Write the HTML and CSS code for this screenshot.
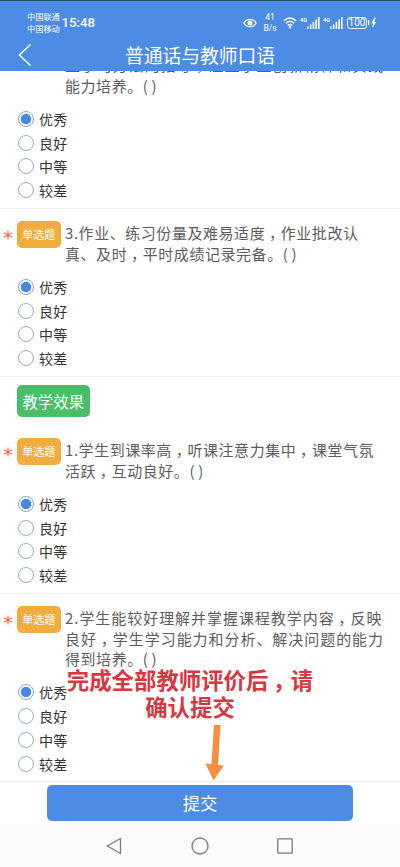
FILE: index.html
```html
<!DOCTYPE html>
<html lang="zh-CN">
<head>
<meta charset="utf-8">
<meta name="viewport" content="width=device-width">
<title>普通话与教师口语</title>
<link rel="stylesheet" href="styles.css">
</head>
<body>
<div class="phone">
  <header class="top">
    <div class="status">
      <div class="carriers"><span>中国联通</span><span>中国移动</span></div>
      <div class="time">15:48</div>
      <svg class="eye" width="14" height="10" viewBox="0 0 14 10"><path d="M.8 5C3.5.1 10.500.1 13.200 5C10.500 9.900 3.500 9.900.8 5Z" fill="none" stroke="#fff" stroke-width="1.3"/><circle cx="7" cy="5" r="2.500" fill="#fff"/></svg>
      <div class="speed"><span>41</span><span>B/s</span></div>
      <svg class="wifi" width="14" height="12" viewBox="0 0 14 12" fill="none" stroke="#fff" stroke-width="1.300"><path d="M.8 3.800Q7-1.700 13.200 3.800M2.800 6.200Q7 2.600 11.200 6.200M4.700 8.400Q7 6.600 9.300 8.400"/><circle cx="7" cy="10.300" r=".6" fill="#fff"/></svg>
      <div class="signal"><b>4G</b><svg width="13" height="12" viewBox="0 0 13 12" fill="#fff"><path d="M0 9.500h1.500V12H0zM2.800 7.500h1.600V12H2.800zM5.600 5h1.600v7H5.600zM8.300 2.500h1.600V12H8.300zM11 0h1.600v12H11z"/></svg></div>
      <div class="signal second"><b>4G</b><svg width="13" height="12" viewBox="0 0 13 12" fill="#fff"><path d="M0 9.500h1.500V12H0zM2.800 7.500h1.600V12H2.800zM5.600 5h1.600v7H5.600zM8.300 2.500h1.600V12H8.300zM11 0h1.600v12H11z"/></svg></div>
      <div class="battery">100</div>
      <svg class="bolt" width="9" height="12" viewBox="0 0 9 12" fill="#fff"><path d="M0 3h1.300v5H0zM6.500.5L3.300 6.500H5L4.300 11L8.200 5H6.300L7.600.8Z"/></svg>
    </div>
    <div class="titlebar">
      <svg class="back" width="14" height="24" viewBox="0 0 14 24"><path d="M12.500 1.500L1.500 12L12.500 22.500" fill="none" stroke="#fff" stroke-width="1.500"/></svg>
      <h1>普通话与教师口语</h1>
    </div>
  </header>

  <main class="content">
    <section class="question first">
      <div class="ask"><p><span class="line wide">生学习方法的指导<i>，</i>注重学生创新精神和实践</span><span class="line">能力培养。<em>( )</em></span></p></div>
      <ul class="options"><li class="on">优秀</li><li>良好</li><li>中等</li><li>较差</li></ul>
    </section>
    <section class="question">
      <div class="ask"><svg class="star" viewBox="0 0 10 10"><path d="M5 .5V9.500M1 2.700L9 7.300M1 7.300L9 2.700"/></svg><span class="badge">单选题</span><p><span class="line">3.作业、练习份量及难易适度<i>，</i>作业批改认</span><span class="line">真、及时<i>，</i>平时成绩记录完备。<em>( )</em></span></p></div>
      <ul class="options"><li class="on">优秀</li><li>良好</li><li>中等</li><li>较差</li></ul>
    </section>
    <h2 class="group">教学效果</h2>
    <section class="question grouped">
      <div class="ask"><svg class="star" viewBox="0 0 10 10"><path d="M5 .5V9.500M1 2.700L9 7.300M1 7.300L9 2.700"/></svg><span class="badge">单选题</span><p><span class="line">1.学生到课率高<i>，</i>听课注意力集中<i>，</i>课堂气氛</span><span class="line">活跃<i>，</i>互动良好。<em>( )</em></span></p></div>
      <ul class="options"><li class="on">优秀</li><li>良好</li><li>中等</li><li>较差</li></ul>
    </section>
    <section class="question">
      <div class="ask"><svg class="star" viewBox="0 0 10 10"><path d="M5 .5V9.500M1 2.700L9 7.300M1 7.300L9 2.700"/></svg><span class="badge">单选题</span><p><span class="line wide">2.学生能较好理解并掌握课程教学内容<i>，</i>反映</span><span class="line wide">良好<i>，</i>学生学习能力和分析、解决问题的能力</span><span class="line">得到培养。<em>( )</em></span></p></div>
      <ul class="options"><li class="on">优秀</li><li>良好</li><li>中等</li><li>较差</li></ul>
    </section>
  </main>

  <div class="submit"><button>提交</button></div>

  <nav class="nav">
    <svg width="16" height="18" viewBox="0 0 16 18"><path d="M14.500 1.500V16.500L1.300 9Z"/></svg>
    <svg width="18" height="18" viewBox="0 0 18 18"><circle cx="9" cy="9" r="8"/></svg>
    <svg width="16" height="16" viewBox="0 0 16 16"><rect x=".8" y=".8" width="14.400" height="14.400" rx=".6"/></svg>
  </nav>

  <div class="note">完成全部教师评价后<i>，</i>请<br>确认提交</div>
  <svg class="arrow" width="20" height="56" viewBox="0 0 20 56"><path d="M9 0H15.500L13 40L18.800 40.500L8.500 55.500L.5 38.500L6.500 39Z" fill="#f98d40"/></svg>
</div>
</body>
</html>
```
FILE: styles.css
```css
*, *::before { box-sizing: border-box; }
body {
  margin: 0;
  font-family: "Noto Sans CJK SC", sans-serif;
  background: #fff;
}
i { font-style: normal; margin: 0 -.25em 0 .25em; }
.phone {
  position: relative;
  width: 400px;
  height: 867px;
  overflow: hidden;
  display: flex;
  flex-direction: column;
}
.top {
  height: 71px;
  flex: none;
  background: #4c8ce4;
  border-top: 1px solid #244c70;
  color: #fff;
}
.status {
  height: 39px;
  padding: 4px 23px 0 27px;
  display: flex;
  align-items: center;
}
.carriers, .speed { display: flex; flex-direction: column; }
.carriers { font-size: 8.2px; line-height: 12px; width: 34.500px; margin-top: -1px; white-space: nowrap; }
.time { font: 500 13.2px/16px Roboto, sans-serif; }
.eye { margin-left: auto; }
.speed {
  width: 14px;
  margin-left: 6px;
  font: 8.5px/10.5px Roboto, sans-serif;
  text-align: center;
}
.wifi { margin-left: 6px; }
.signal { display: flex; align-items: flex-start; margin-left: 3px; }
.signal b { font: 700 5.5px/6px Roboto, sans-serif; width: 7px; }
.second { margin-left: 3px; }
.battery {
  width: 20px;
  height: 12px;
  margin-left: 4px;
  border: 1px solid #fff;
  border-radius: 3px;
  font: 10px/10.5px Roboto, sans-serif;
  text-align: center;
}
.bolt { margin-left: 1px; }
.titlebar {
  height: 29px;
  display: grid;
  grid-template-columns: 18px 1fr 18px;
  align-items: center;
  padding: 0 18px;
}
.titlebar h1 {
  margin: 0;
  font-size: 18.8px;
  font-weight: 400;
  line-height: 28px;
  text-align: center;
}
.content {
  height: 711px;
  flex: none;
  overflow: hidden;
  color: #5c5c5c;
}
.question {
  height: 168px;
  padding-top: 14px;
  border-bottom: 1px solid #eee;
}
.question.first { height: 154px; margin-top: -16px; padding-top: 0; }
.question.grouped { height: 177px; padding-top: 23px; }
.question:last-child { height: 188px; }
.first .ask { padding-left: 65px; }
.ask { display: flex; align-items: flex-start; padding-left: 3px; }
.ask p { margin: 0; }
.line {
  display: block;
  height: 20.5px;
  line-height: 20.5px;
  font-size: 15px;
  letter-spacing: .55px;
  white-space: nowrap;
}
.wide { letter-spacing: .95px; }
.line em { font-style: normal; letter-spacing: .7px; word-spacing: -1px; }
.star {
  width: 10px;
  height: 10px;
  margin: 6.500px 3.500px 0 0;
  fill: none;
  stroke: #ee6c50;
  stroke-width: 1.2;
}
.badge {
  width: 44.500px;
  height: 27px;
  margin: -2px 4px 0 0;
  border-radius: 5px;
  background: #f0ad3e;
  color: #fff;
  font-size: 11px;
  line-height: 26px;
  text-align: center;
}
.options {
  list-style: none;
  margin: 11px 0 0;
  padding: 0 0 0 17.500px;
  color: #333;
}
.options li {
  display: flex;
  align-items: center;
  height: 23.750px;
  font-size: 14px;
  letter-spacing: .2px;
}
.options li::before {
  content: "";
  width: 16px;
  height: 16px;
  margin-right: 5.500px;
  border: 1px solid #93aec8;
  border-radius: 50%;
}
.options .on::before {
  border-color: #78a5df;
  background: radial-gradient(circle, #4688e3 4.800px, #fff 5.500px);
}
.group {
  width: 73.500px;
  height: 32px;
  margin: 8px 0 0 16.500px;
  border-radius: 5px;
  background: #4abe67;
  color: #fff;
  font-size: 15.400px;
  font-weight: 400;
  line-height: 32px;
  text-align: center;
}
.submit {
  height: 43px;
  flex: none;
  padding: 3px 47px 0;
}
.submit button {
  display: block;
  width: 306px;
  height: 36px;
  padding: 0;
  border: 0;
  border-radius: 5px;
  background: #4c8ce4;
  color: #fff;
  font: 17.3px/36px "Noto Sans CJK SC", sans-serif;
}
.nav {
  flex: 1;
  display: flex;
  align-items: center;
  justify-content: space-between;
  padding: 0 107px 0 106px;
  background: #fbfbfb;
}
.nav svg { fill: none; stroke: #7b7b7b; stroke-width: 1.3; stroke-linejoin: round; }
.note {
  position: absolute;
  left: 60px;
  top: 666px;
  width: 260px;
  color: #d9363f;
  font-size: 22.400px;
  font-weight: 700;
  line-height: 27px;
  text-align: center;
  white-space: nowrap;
}
.note i { margin: 0 -.2em 0 .2em; }
.arrow { position: absolute; left: 205px; top: 725px; }
```
